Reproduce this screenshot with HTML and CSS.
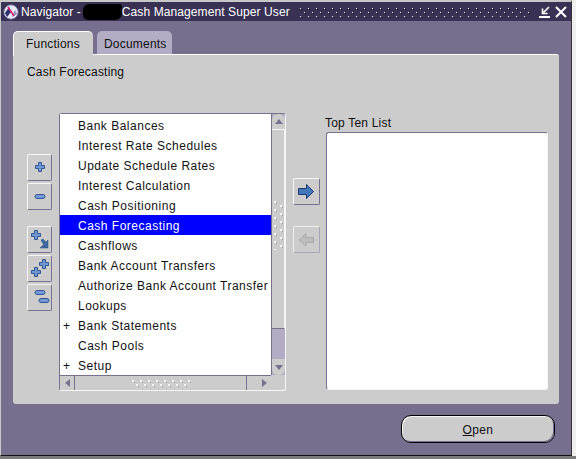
FILE: index.html
```html
<!DOCTYPE html>
<html lang="en">
<head>
    <meta charset="UTF-8">
    <meta name="viewport" content="width=device-width, initial-scale=1.0">
    <title>Navigator</title>
    <link rel="stylesheet" href="styles.css">
</head>
<body>
    <div class="window">
        <svg width="0" height="0" class="defs">
            <defs>
                <pattern id="grip" width="8" height="8" patternUnits="userSpaceOnUse">
                    <rect x="1" y="1" width="1" height="1" fill="#fff"/>
                    <rect x="2" y="2" width="1" height="1" fill="#15102a"/>
                    <rect x="5" y="5" width="1" height="1" fill="#fff"/>
                    <rect x="6" y="6" width="1" height="1" fill="#15102a"/>
                </pattern>
                <pattern id="gripLight" width="8" height="8" patternUnits="userSpaceOnUse">
                    <rect x="1" y="1" width="2" height="2" fill="#f4f4f4"/>
                    <rect x="3" y="3" width="1" height="1" fill="#9a9a9a"/>
                    <rect x="5" y="5" width="2" height="2" fill="#f4f4f4"/>
                    <rect x="7" y="7" width="1" height="1" fill="#9a9a9a"/>
                </pattern>
                <pattern id="gripTall" width="10" height="8" patternUnits="userSpaceOnUse">
                    <rect x="1" y="1" width="2" height="2" fill="#f4f4f4"/>
                    <rect x="3" y="3" width="1" height="1" fill="#9a9a9a"/>
                    <rect x="7" y="5" width="2" height="2" fill="#f4f4f4"/>
                    <rect x="9" y="7" width="1" height="1" fill="#9a9a9a"/>
                </pattern>
                <path id="plus" d="M3.5 .5h3v3h3v3h-3v3h-3v-3h-3v-3h3z"/>
                <rect id="minus" x=".5" y=".5" width="10" height="4" rx="2"/>
            </defs>
        </svg>

        <div class="titlebar">
            <svg class="app-icon" width="16" height="16" viewBox="0 0 16 16">
                <circle cx="8" cy="8" r="7.2" fill="#e8e8f4" stroke="#6f7199"/>
                <path d="M2 9 L6 3 L8 8 L4 13z" fill="#2f3270"/>
                <path d="M9 13 L14 10 L12 6z" fill="#8d90c0"/>
                <path d="M5 3 L11 12" stroke="#d8206c" stroke-width="1.6"/>
            </svg>
            <span class="title-text">Navigator -</span>
            <span class="redacted"></span>
            <span class="title-text">Cash Management Super User</span>
            <svg class="title-grip" height="10"><rect width="100%" height="10" fill="url(#grip)"/></svg>
            <svg class="win-btn" width="12" height="14" viewBox="0 0 12 14">
                <path d="M10 2 L4 8 M3.5 3.5 V8.5 H8.5" fill="none" stroke="#fff" stroke-width="1.6"/>
                <rect x="0" y="11" width="11" height="2" fill="#fff"/>
            </svg>
            <svg class="win-btn" width="12" height="14" viewBox="0 0 12 14">
                <path d="M1 2 L11 12 M11 2 L1 12" stroke="#fff" stroke-width="2"/>
            </svg>
        </div>

        <div class="content">
            <div class="tabs">
                <div class="tab active">Functions</div>
                <div class="tab">Documents</div>
            </div>

            <div class="panel">
                <div class="panel-title">Cash Forecasting</div>

                <div class="main-row">
                    <div class="side-buttons">
                        <button class="tool-btn">
                            <svg width="23" height="25" viewBox="0 0 23 25"><use class="blue" href="#plus" x="7" y="7"/></svg>
                        </button>
                        <button class="tool-btn">
                            <svg width="23" height="25" viewBox="0 0 23 25"><use class="blue" href="#minus" x="6.5" y="10"/></svg>
                        </button>
                        <button class="tool-btn group-start">
                            <svg width="23" height="25" viewBox="0 0 23 25"><use class="blue" href="#plus" x="3" y="3"/><path class="dark" d="M13 13l2-1 3 3 2-2v8h-8l2-2 1.500-1.500z"/></svg>
                        </button>
                        <button class="tool-btn">
                            <svg width="23" height="25" viewBox="0 0 23 25"><use class="blue" href="#plus" x="11" y="3"/><use class="blue" href="#plus" x="3" y="11"/></svg>
                        </button>
                        <button class="tool-btn">
                            <svg width="23" height="25" viewBox="0 0 23 25"><use class="blue" href="#minus" x="6.500" y="5"/><use class="blue" href="#minus" x="10.500" y="13"/></svg>
                        </button>
                    </div>

                    <div class="list-box">
                        <div class="list-top">
                            <ul class="tree">
                                <li>Bank Balances</li>
                                <li>Interest Rate Schedules</li>
                                <li>Update Schedule Rates</li>
                                <li>Interest Calculation</li>
                                <li>Cash Positioning</li>
                                <li class="selected">Cash Forecasting</li>
                                <li>Cashflows</li>
                                <li>Bank Account Transfers</li>
                                <li>Authorize Bank Account Transfer</li>
                                <li>Lookups</li>
                                <li class="branch">Bank Statements</li>
                                <li>Cash Pools</li>
                                <li class="branch">Setup</li>
                            </ul>
                            <div class="vscroll">
                                <div class="arrow-cap up"><span class="tri tri-up"></span></div>
                                <div class="vthumb">
                                    <svg class="vgrip" width="10" height="50"><rect width="10" height="50" fill="url(#gripTall)"/></svg>
                                </div>
                                <div class="vtrack"></div>
                                <div class="arrow-cap down"><span class="tri tri-down"></span></div>
                            </div>
                        </div>
                        <div class="hscroll">
                            <div class="hcap"><span class="tri tri-left"></span></div>
                            <div class="hthumb">
                                <svg width="60" height="8"><rect width="60" height="8" fill="url(#gripLight)"/></svg>
                            </div>
                            <div class="hgap"></div>
                            <div class="hcap"><span class="tri tri-right"></span></div>
                        </div>
                    </div>

                    <div class="move-buttons">
                        <button class="tool-btn">
                            <svg width="25" height="25" viewBox="0 0 25 25"><path class="dark-blue" d="M4.500 9.500h8v-4l7 7-7 7v-4h-8z"/></svg>
                        </button>
                        <button class="tool-btn off">
                            <svg width="25" height="25" viewBox="0 0 25 25"><path d="M12 6.500v4h7.500v5H12v3.500L5 13z" fill="#bdbdbd" stroke="#a9a9a9"/></svg>
                        </button>
                    </div>

                    <div class="top-ten">
                        <div class="top-label">Top Ten List</div>
                        <div class="top-box"></div>
                    </div>
                </div>
            </div>

            <div class="footer">
                <button class="open-btn"><u>O</u>pen</button>
            </div>
        </div>
    </div>
    <div class="desktop-strip"></div>
</body>
</html>
```

FILE: styles.css
```css
* {
    box-sizing: border-box;
}
html, body {
    margin: 0;
    padding: 0;
}
body {
    font-family: "Liberation Sans", Arial, sans-serif;
    font-size: 12px;
    color: #111;
    background: #f0f0f0;
    overflow: hidden;
}
.defs {
    position: absolute;
}
.window {
    width: 572px;
    height: 456px;
    background: #776f8e;
    border-top: 2px solid #c8c8c8;
    border-left: 1px solid #c8c8c8;
    border-right: 1px solid #333;
    border-bottom: 1px solid #111;
    display: flex;
    flex-direction: column;
}
.desktop-strip {
    height: 3px;
    background: #7c7c7c;
}
.titlebar {
    height: 19px;
    background: #3a3254;
    color: #fff;
    display: flex;
    align-items: center;
    padding: 0 4px 0 2px;
    flex: none;
}
.app-icon {
    margin-right: 2px;
    flex: none;
}
.title-text {
    white-space: nowrap;
    font-size: 12px;
    letter-spacing: 0.1px;
}
.redacted {
    width: 39px;
    height: 16px;
    margin-left: 2px;
    background: #000;
    border-radius: 6px 3px 7px 5px;
    flex: none;
}
.title-grip {
    flex: 1;
    margin: 0 5px 0 9px;
}
.win-btn {
    flex: none;
    margin-left: 4px;
}
.content {
    flex: 1;
    padding: 10px 12px 0 12px;
    display: flex;
    flex-direction: column;
}
.tabs {
    display: flex;
    height: 23px;
    gap: 4px;
    position: relative;
    z-index: 1;
    flex: none;
}
.tab {
    padding: 6px 5px 0 7px;
    background: #b2acc4;
    border-radius: 5px 5px 0 0;
    height: 23px;
    font-size: 12px;
    letter-spacing: 0.2px;
}
.tab.active {
    background: #cccccc;
    border-top: 1px solid #fff;
    border-left: 1px solid #fff;
    height: 25px;
    width: 80px;
    padding: 5px 0 0 12px;
}
.panel {
    height: 350px;
    background: #cccccc;
    border-top: 1px solid #fff;
    border-radius: 0 3px 3px 3px;
    padding: 10px 11px 0 14px;
    flex: none;
}
.panel-title {
    letter-spacing: 0.2px;
    line-height: 14px;
}
.main-row {
    display: flex;
    margin-top: 34px;
    height: 278px;
}
.side-buttons {
    width: 32px;
    padding-top: 41px;
    display: flex;
    flex-direction: column;
    gap: 2px;
    flex: none;
}
.tool-btn {
    width: 25px;
    height: 27px;
    padding: 0;
    background: #cccccc;
    border: 1px solid;
    border-color: #f6f6f6 #77708f #77708f #f6f6f6;
    border-radius: 2px;
    display: flex;
    align-items: center;
    justify-content: center;
    flex: none;
}
.tool-btn.group-start {
    margin-top: 14px;
}
.tool-btn.off {
    border-color: #eeeeee #a9a5b8 #a9a5b8 #eeeeee;
}
.blue {
    fill: #6f98d4;
    stroke: #34558f;
    stroke-width: 1;
}
.dark {
    fill: #3f689f;
    stroke: #2c4a7a;
    stroke-width: 0.5;
}
.dark-blue {
    fill: #4277bd;
    stroke: #1f3a6a;
    stroke-width: 1;
}
.list-box {
    width: 227px;
    height: 278px;
    border: 1px solid;
    border-color: #77708f #f6f6f6 #f6f6f6 #77708f;
    border-radius: 3px;
    background: #cccccc;
    display: flex;
    flex-direction: column;
    flex: none;
}
.list-top {
    display: flex;
    height: 261px;
}
.tree {
    list-style: none;
    margin: 0;
    padding: 1px 0 0 0;
    width: 211px;
    background: #fff;
    overflow: hidden;
    flex: none;
}
.tree li {
    height: 20px;
    line-height: 22px;
    padding-left: 18px;
    white-space: nowrap;
    position: relative;
    letter-spacing: 0.5px;
}
.tree li.selected {
    background: #0000ff;
    color: #fff;
}
.tree li.branch::before {
    content: "+";
    position: absolute;
    left: 3px;
}
.vscroll {
    width: 14px;
    background: #b2acc4;
    border-left: 1px solid #77708f;
    display: flex;
    flex-direction: column;
    flex: none;
}
.arrow-cap {
    height: 16px;
    background: #cccccc;
    display: flex;
    align-items: center;
    justify-content: center;
    flex: none;
}
.arrow-cap.up {
    border-bottom: 1px solid #f6f6f6;
    border-radius: 6px 6px 0 0;
}
.arrow-cap.down {
    border-radius: 0 0 6px 6px;
}
.vthumb {
    height: 199px;
    background: #cccccc;
    border-bottom: 1px solid #77708f;
    border-right: 1px solid #f6f6f6;
    display: flex;
    align-items: center;
    justify-content: center;
    flex: none;
}
.vgrip {
    margin-top: -8px;
}
.vtrack {
    flex: 1;
}
.tri {
    display: block;
    width: 0;
    height: 0;
    border: 4px solid transparent;
}
.tri-up {
    border-top: 0;
    border-bottom: 5px solid #77708f;
}
.tri-down {
    border-bottom: 0;
    border-top: 5px solid #77708f;
}
.tri-left {
    border-left: 0;
    border-right: 5px solid #77708f;
}
.tri-right {
    border-right: 0;
    border-left: 5px solid #77708f;
}
.hscroll {
    height: 15px;
    width: 211px;
    display: flex;
    border-top: 1px solid #77708f;
    background: #cccccc;
}
.hcap {
    width: 14px;
    display: flex;
    align-items: center;
    justify-content: center;
    flex: none;
}
.hthumb {
    width: 173px;
    border-left: 1px solid #77708f;
    border-right: 1px solid #77708f;
    display: flex;
    align-items: center;
    justify-content: center;
    flex: none;
}
.hgap {
    flex: 1;
}
.move-buttons {
    width: 39px;
    padding: 65px 0 0 7px;
    display: flex;
    flex-direction: column;
    gap: 21px;
    flex: none;
}
.move-buttons .tool-btn {
    width: 27px;
    height: 27px;
}
.top-ten {
    width: 223px;
    margin-top: 3px;
    flex: none;
}
.top-label {
    height: 16px;
    line-height: 14px;
    letter-spacing: 0.2px;
}
.top-box {
    height: 258px;
    width: 222px;
    margin-left: 1px;
    background: #fff;
    border: 1px solid;
    border-color: #77708f #f6f6f6 #f6f6f6 #77708f;
    border-radius: 3px;
}
.footer {
    display: flex;
    justify-content: flex-end;
    padding: 11px 4px 0 0;
}
.open-btn {
    width: 154px;
    height: 28px;
    background: #cccccc;
    border: 1px solid #000;
    border-radius: 10px;
    font-family: "Liberation Sans", Arial, sans-serif;
    font-size: 12px;
    letter-spacing: 0.35px;
    color: #111;
    padding: 1px 0 0 0;
    box-shadow: inset 1px 1px 0 #f6f6f6, inset -1px -1px 0 #77708f;
}
```
